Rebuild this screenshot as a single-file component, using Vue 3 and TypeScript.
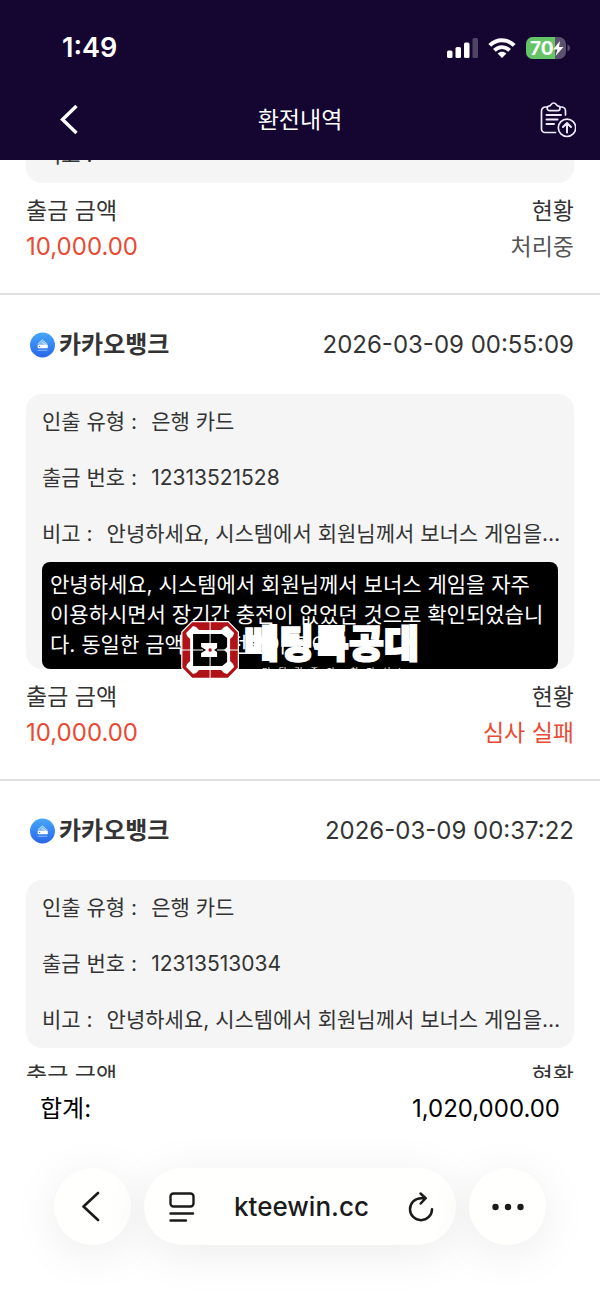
<script setup lang="ts">
import { onMounted, ref } from 'vue'

interface Withdrawal {
  id: string
  bank: string
  time: string
  type: string
  number: string
  note: string
  detail?: string
  amount: string
  status: string
  failed: boolean
}

const notice = '안녕하세요, 시스템에서 회원님께서 보너스 게임을 자주 이용하시면서 장기간 충전이 없었던 것으로 확인되었습니다.'

const items: Withdrawal[] = [
  { id: 'a', bank: '카카오뱅크', time: '2026-03-09 01:02:41', type: '은행 카드', number: '12313525107', note: '', amount: '10,000.00', status: '처리중', failed: false },
  { id: 'b', bank: '카카오뱅크', time: '2026-03-09 00:55:09', type: '은행 카드', number: '12313521528', note: notice, detail: notice + ' 동일한 금액으로 전환이 되어', amount: '10,000.00', status: '심사 실패', failed: true },
  { id: 'c', bank: '카카오뱅크', time: '2026-03-09 00:37:22', type: '은행 카드', number: '12313513034', note: notice, amount: '10,000.00', status: '심사 실패', failed: true },
]

const slogan = Array.from('먹튀검증의 최전선!')

const list = ref<HTMLElement | null>(null)

onMounted(() => {
  if (list.value) list.value.scrollTop = 244
})
</script>

<template>
  <div class="screen">
    <header class="top">
      <div class="status-bar">
        <span class="clock">1:49</span>
        <div class="indicators">
          <svg width="31" height="20" viewBox="0 0 31 20" fill="#fff" aria-hidden="true">
            <rect x="0" y="12.500" width="5.500" height="7.500" rx="1.500" />
            <rect x="8.500" y="9" width="5.500" height="11" rx="1.500" />
            <rect x="17" y="4.500" width="5.500" height="15.500" rx="1.500" />
            <rect x="25.500" y="0" width="5.500" height="20" rx="1.500" opacity=".25" />
          </svg>
          <svg width="28" height="20" viewBox="0 0 28 20" fill="none" stroke="#fff" stroke-width="4" aria-hidden="true">
            <path d="M1.800 7.400C8.500.6 19.500.6 26.200 7.400" />
            <path d="M6.400 12.300c4.300-4.300 10.900-4.300 15.200 0" stroke-width="3.800" />
            <path d="M14 20l-4.400-4.500c2.600-2.300 6.200-2.300 8.800 0z" fill="#fff" stroke="none" />
          </svg>
          <svg width="44" height="22" viewBox="0 0 44 22" role="img" aria-label="70%">
            <defs><clipPath id="cell"><rect width="40" height="22" rx="7" /></clipPath></defs>
            <g clip-path="url(#cell)"><rect width="40" height="22" fill="#5b5070" /><rect width="29" height="22" fill="#65c466" /></g>
            <path d="M41.500 7.500c2 1 2.500 2.200 2.500 3.500s-.5 2.500-2.500 3.500z" fill="#5b5070" />
            <text x="4" y="17.500" class="level">70</text>
            <path d="M34 4l-7 8.500h4.500L29.500 19l8-9H33z" fill="#fff" />
          </svg>
        </div>
      </div>
      <nav class="title-bar">
        <button class="icon-button" type="button" aria-label="뒤로">
          <svg width="20" height="32" viewBox="0 0 20 32" fill="none" stroke="#fff" stroke-width="3.400"><path d="M18.500 2L4.500 15.500l14 13.500" /></svg>
        </button>
        <h1>환전내역</h1>
        <button class="icon-button" type="button" aria-label="내역 제출">
          <svg width="36" height="36" viewBox="0 0 36 36" fill="none" stroke="#efeaff" stroke-width="1.700" stroke-linecap="round" stroke-linejoin="round">
            <path d="M7 5H5.500a4 4 0 0 0-4 4v18A3.500 3.500 0 0 0 5 30.500h10.500M20.500 5h1a4 4 0 0 1 4 4v4" />
            <path d="M9 4.200c2 0 2-3.200 4.700-3.200s2.700 3.200 4.700 3.200c1 0 1.600.8 1.600 1.800 0 1.500-.6 2.600-2 2.600H9.200c-1.400 0-2-1.100-2-2.600 0-1 .8-1.800 1.800-1.800z" />
            <path d="M6.500 13H21M6.500 17.500h11M6.500 22H14" stroke-width="2" />
            <circle cx="27" cy="25.800" r="8.700" /><path d="M27 30.500v-9M23 25l4-4 4 4" stroke-width="2" />
          </svg>
        </button>
      </nav>
    </header>

    <main ref="list" class="list">
      <article v-for="item in items" :key="item.id" class="record">
        <header class="record-head">
          <svg class="bank-icon" width="25" height="26" viewBox="0 0 26 26" aria-hidden="true">
            <defs><linearGradient :id="'sky-' + item.id" x2="0" y2="1"><stop stop-color="#45a8f8" /><stop offset="1" stop-color="#2965ec" /></linearGradient></defs>
            <circle cx="13" cy="13" r="13" :fill="'url(#sky-' + item.id + ')'" />
            <path d="M8 12l4.800-4.500L18 12" fill="#79b9fb" stroke="#b5d9ff" />
            <rect x="8" y="12.500" width="10.500" height="4" rx="1" fill="#fff" />
            <path d="M12 10l5 3" stroke="#d6ebff" /><path d="M8 18.500h10" stroke="#8fbcfb" /><circle cx="10" cy="14.500" r=".7" fill="#397aef" />
          </svg>
          <h2>{{ item.bank }}</h2>
          <time>{{ item.time }}</time>
        </header>
        <dl class="details">
          <div class="row"><dt>인출 유형 :</dt><dd>{{ item.type }}</dd></div>
          <div class="row"><dt>출금 번호 :</dt><dd>{{ item.number }}</dd></div>
          <div class="row"><dt>비고 :</dt><dd>{{ item.note }}</dd></div>
          <div v-if="item.detail" class="full-note"><p>{{ item.detail }}</p></div>
        </dl>
        <div class="summary"><span>출금 금액</span><span>현황</span></div>
        <div class="summary">
          <span class="amount">{{ item.amount }}</span>
          <span class="state" :class="{ failed: item.failed }">{{ item.status }}</span>
        </div>
      </article>
    </main>

    <footer class="bottom">
      <div class="total"><span>합계:</span><span>1,020,000.00</span></div>
      <div class="browser-bar">
        <button class="round" type="button" aria-label="이전 페이지">
          <svg width="22" height="32" viewBox="0 0 22 32" fill="none" stroke="#1b1b1b" stroke-width="2.600" stroke-linecap="round" stroke-linejoin="round"><path d="M16 2L1.500 15.500 16 29" /></svg>
        </button>
        <div class="address">
          <button class="icon-button" type="button" aria-label="페이지 메뉴">
            <svg width="26" height="30" viewBox="0 0 26 30" fill="none" stroke="#1b1b1b" stroke-width="2.400" stroke-linecap="round"><rect x="1.500" y="1.500" width="23" height="13" rx="3" /><path d="M1.500 21.500h22.500M1.500 28.500H17" /></svg>
          </button>
          <a href="#">kteewin.cc</a>
          <button class="icon-button" type="button" aria-label="새로고침">
            <svg width="26" height="30" viewBox="0 0 26 30" fill="none" stroke="#1b1b1b" stroke-width="2.500" stroke-linecap="round" stroke-linejoin="round"><path d="M17.500 6.200H13A11 11 0 1 0 24 17.200M12.500 1.500l5.200 4.700-5 5.300" /></svg>
          </button>
        </div>
        <button class="round" type="button" aria-label="더 보기">
          <svg width="32" height="8" viewBox="0 0 32 8" fill="#1b1b1b"><circle cx="3.500" cy="4" r="3.200" /><circle cx="16" cy="4" r="3.200" /><circle cx="28.500" cy="4" r="3.200" /></svg>
        </button>
      </div>
    </footer>

    <div class="watermark">
      <svg width="58" height="58" viewBox="0 0 58 58" aria-hidden="true">
        <path d="M11 .7h36L57.300 11v36L47 57.300H11L.7 47V11z" fill="#b01217" stroke="#fff" stroke-width="1.200" />
        <path d="M12 5l3 1 3 3h22l3-3 3-1 7 7-1 3-3 3v22l3 3 1 3-7 7-3-1-3-3H18l-3 3-3 1-7-7 1-3 3-3V18l-3-3-1-3z" fill="#fff" />
        <path d="M12 13h29l5 4v9l-3 3 3 3v9l-5 4H12z" fill="#000" />
        <path d="M20 22h16v5l-3 2 3 2v5H20v-4l5-3-5-3z" fill="#fff" />
        <path d="M29 0v22M29 36v22M0 29h22M36 29h22" stroke="#fff" />
        <circle cx="29" cy="29" r="1.700" fill="#b01217" />
      </svg>
      <div class="brand">
        <strong>베팅특공대</strong>
        <small><span v-for="(letter, i) in slogan" :key="i">{{ letter }}</span></small>
      </div>
    </div>
  </div>
</template>

<style>
body { margin: 0; }
</style>

<style scoped>
.screen {
  position: relative;
  height: 100vh;
  display: flex;
  flex-direction: column;
  background: #fff;
  color: #333;
  font-family: Inter, "Noto Sans CJK KR", sans-serif;
  line-height: 32px;
  overflow: hidden;
}
h1, h2, dl, dd, p { margin: 0; }
button { border: 0; padding: 0; background: none; color: inherit; font: inherit; }
svg { display: block; flex: none; }
.top { flex: none; background: #140630; color: #fff; }
.status-bar {
  height: 80px;
  box-sizing: border-box;
  padding: 16px 30px 0 62px;
  display: flex;
  align-items: center;
  justify-content: space-between;
}
.clock { font-size: 27px; font-weight: 600; }
.indicators { display: flex; align-items: center; gap: 10px; }
.level { font: 700 19px Inter, sans-serif; fill: #fff; }
.title-bar {
  height: 80px;
  padding: 0 24px;
  display: grid;
  grid-template-columns: 1fr auto 1fr;
  align-items: center;
}
.title-bar .icon-button:first-child { padding-left: 34px; }
.title-bar .icon-button:last-child { justify-self: end; }
h1 { font-size: 23px; font-weight: 400; }
.list { flex: 1; min-height: 0; overflow-y: auto; scrollbar-width: none; }
.record { padding: 0 26px 28px; border-bottom: 2px solid #e0e0e0; }
.record-head { height: 99px; display: flex; align-items: center; }
.bank-icon { margin: 0 4px; }
h2 { flex: 1; font-size: 24px; font-weight: 700; }
time { font-size: 24px; }
.details {
  margin-bottom: 10px;
  padding: 0 16px;
  border-radius: 16px;
  background: #f5f5f5;
  font-size: 21px;
}
.row { height: 56px; margin-right: -8px; display: flex; align-items: center; gap: 14px; }
dt { flex: none; }
dd { min-width: 0; overflow: hidden; text-overflow: ellipsis; white-space: nowrap; }
.full-note { padding: 8px 8px 9px; border-radius: 8px; background: #000; color: #fff; }
.full-note p { line-height: 30px; word-break: break-all; }
.summary {
  display: flex;
  justify-content: space-between;
  font-size: 23px;
  line-height: 36px;
}
.amount { font-size: 24px; color: #e84a33; }
.state { color: #555; }
.state.failed { color: #e84a33; }
.bottom { flex: none; height: 221px; overflow: hidden; background: #fff; }
.total {
  height: 62px;
  padding: 0 40px;
  display: flex;
  align-items: center;
  justify-content: space-between;
  color: #000;
  font-size: 24px;
}
.browser-bar { padding: 28px 54px 54px; display: flex; gap: 13px; color: #1b1b1b; }
.round, .address {
  height: 77px;
  display: flex;
  align-items: center;
  border-radius: 39px;
  background: #fffffe;
  box-shadow: 0 8px 48px rgba(0, 0, 0, .08);
}
.round { width: 77px; flex: none; justify-content: center; }
.address { flex: 1; padding: 0 22px 0 25px; justify-content: space-between; }
.address a { color: inherit; text-decoration: none; font-size: 26px; font-weight: 500; }
.watermark {
  position: absolute;
  top: 50%;
  left: 50%;
  transform: translate(-50%, -50%);
  display: flex;
  gap: 5px;
  color: #fff;
  pointer-events: none;
}
.brand { display: flex; flex-direction: column; white-space: nowrap; }
.brand strong { font-size: 38px; line-height: 44px; font-weight: 900; -webkit-text-stroke: 2px #fff; }
.brand small {
  padding: 0 18px;
  display: flex;
  justify-content: space-between;
  font-size: 9px;
  line-height: 14px;
}
</style>
